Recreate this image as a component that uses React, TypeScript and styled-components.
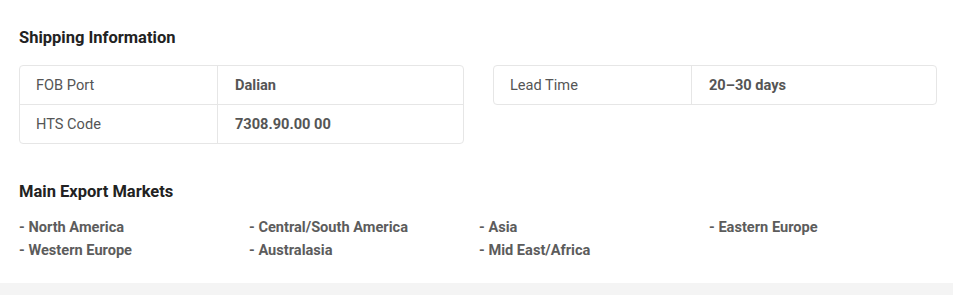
import styled, { createGlobalStyle } from 'styled-components';

const GlobalStyle = createGlobalStyle`
  body {
    margin: 0;
    background: #f4f4f4;
    font-family: Roboto, 'Liberation Sans', Arial, sans-serif;
  }
`;

interface Spec {
  label: string;
  value: string;
}

const leftSpecs: Spec[] = [
  { label: 'FOB Port', value: 'Dalian' },
  { label: 'HTS Code', value: '7308.90.00 00' },
];

const rightSpecs: Spec[] = [{ label: 'Lead Time', value: '20–30 days' }];

const markets = [
  'North America',
  'Central/South America',
  'Asia',
  'Eastern Europe',
  'Western Europe',
  'Australasia',
  'Mid East/Africa',
];

function SpecTable({ rows }: { rows: Spec[] }) {
  return (
    <Table>
      {rows.map((row) => (
        <Row key={row.label}>
          <Label>{row.label}</Label>
          <Value>{row.value}</Value>
        </Row>
      ))}
    </Table>
  );
}

function App() {
  return (
    <>
      <GlobalStyle />
      <Panel>
        <Heading>Shipping Information</Heading>
        <TableGrid>
          <SpecTable rows={leftSpecs} />
          <SpecTable rows={rightSpecs} />
        </TableGrid>

        <Heading $spaced>Main Export Markets</Heading>
        <MarketList>
          {markets.map((m) => (
            <Market key={m}>- {m}</Market>
          ))}
        </MarketList>
      </Panel>
    </>
  );
}

export default App;

const Panel = styled.section`
  background: #fff;
  padding: 27px 16px 21px 19px;
`;

const Heading = styled.h2<{ $spaced?: boolean }>`
  margin: ${({ $spaced }) => ($spaced ? '37px' : '0')} 0 0;
  font-size: 16.5px;
  line-height: 22px;
  font-weight: 700;
  color: #222;
`;

const TableGrid = styled.div`
  margin-top: 16px;
  display: grid;
  grid-template-columns: 445px 444px;
  gap: 29px;
  align-items: start;
`;

const Table = styled.div`
  border: 1px solid #e6e6e6;
  border-radius: 4px;
  overflow: hidden;
`;

const Row = styled.div`
  display: grid;
  grid-template-columns: 198px 1fr;
  height: 38px;

  & + & {
    border-top: 1px solid #e6e6e6;
  }
`;

const Label = styled.div`
  display: flex;
  align-items: center;
  padding-left: 16px;
  border-right: 1px solid #e6e6e6;
  font-size: 14.6px;
  color: #555;
`;

const Value = styled.div`
  display: flex;
  align-items: center;
  padding-left: 17px;
  font-size: 14.6px;
  font-weight: 700;
  color: #555;
`;

const MarketList = styled.div`
  margin-top: 13px;
  display: grid;
  grid-template-columns: repeat(4, 230px);
`;

const Market = styled.div`
  font-size: 14.6px;
  line-height: 23px;
  font-weight: 700;
  color: #5c5c5c;
`;
